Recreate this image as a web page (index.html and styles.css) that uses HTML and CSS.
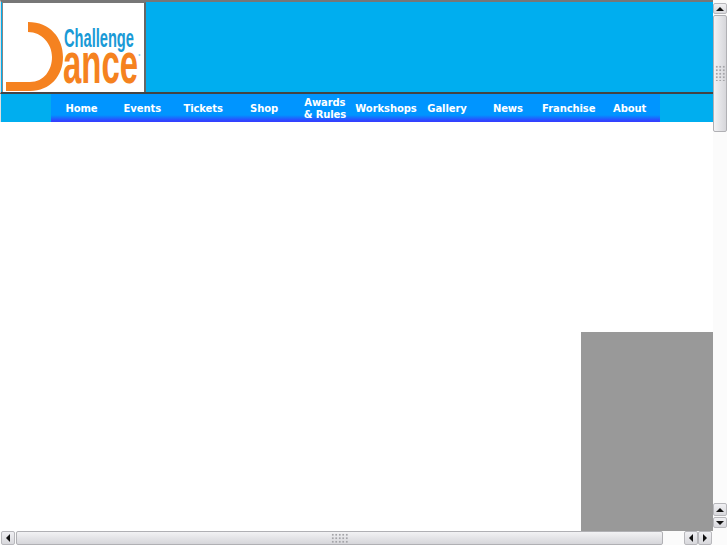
FILE: index.html
```html
<!DOCTYPE html>
<html>
<head>
	<title>Challenge Dance</title>
	<link rel="stylesheet" href="styles.css">
</head>
<body>
	<div class="window">
		<div class="content">
			<div class="header">
				<div class="logo">
					<svg width="141" height="89" viewBox="3 3 141 89">
						<path class="logo-arc" d="M28 22C50 22 63 38 63 57C63 76 50 91 30 91L6 91L6 82L30 82C44 82 52 70 52 57C52 44 42 32 28 32Z"/>
						<text class="logo-small" transform="translate(64 47) scale(.586 1)">Challenge</text>
						<text class="logo-big" transform="translate(63 83) scale(.568 1)">ance</text>
						<circle class="logo-mark" cx="139.500" cy="55" r="1"/>
					</svg>
				</div>
			</div>
			<div class="nav">
				<ul class="menu">
					<li>Home</li>
					<li>Events</li>
					<li>Tickets</li>
					<li>Shop</li>
					<li>Awards<br>&amp; Rules</li>
					<li>Workshops</li>
					<li>Gallery</li>
					<li>News</li>
					<li>Franchise</li>
					<li>About</li>
				</ul>
			</div>
			<div class="main">
				<div class="grey-box"></div>
			</div>
		</div>

		<div class="vbar">
			<div class="btn first"><span class="arrow up"></span></div>
			<div class="thumb vthumb"><span class="grip"></span></div>
			<div class="track"></div>
			<div class="btn second"><span class="arrow up"></span></div>
			<div class="btn last"><span class="arrow down"></span></div>
		</div>

		<div class="hbar">
			<div class="btn"><span class="arrow left"></span></div>
			<div class="thumb hthumb"><span class="grip"></span></div>
			<div class="track"></div>
			<div class="btn"><span class="arrow left"></span></div>
			<div class="btn"><span class="arrow right"></span></div>
		</div>
		<div class="corner"></div>
	</div>
</body>
</html>
```

FILE: styles.css
```css
html, body {
    margin: 0;
    height: 100%;
    overflow: hidden;
    background-color: #fff;
}

.window {
    display: grid;
    grid-template-columns: 713px 14px;
    grid-template-rows: 531px 14px;
    width: 727px;
    height: 545px;
}

.content {
    display: flex;
    flex-direction: column;
    min-height: 0;
}

.header {
    box-sizing: border-box;
    height: 94px;
    padding-left: 1px;
    background-color: #00aeef;
    border-top: 2px solid #777;
    border-bottom: 2px solid #444;
    border-left: 1px solid #e0e0e0;
}

.logo {
    box-sizing: border-box;
    width: 144px;
    height: 90px;
    background-color: #fff;
    border-top: 1px solid #777;
    border-right: 2px solid #666;
    border-left: 1px solid #888;
}

.logo svg {
    display: block;
    overflow: visible;
}

.logo-arc {
    fill: #f58220;
}

.logo-small {
    fill: #1a9ad6;
    font-family: "Liberation Sans", Arial, sans-serif;
    font-size: 25px;
    font-weight: bold;
}

.logo-big {
    fill: #f58220;
    font-family: "Liberation Sans", Arial, sans-serif;
    font-weight: bold;
    font-size: 58px;
}

.logo-mark {
    fill: #8fd0ee;
}

.nav {
    height: 28px;
    padding-left: 50px;
    background-color: #00aeef;
    border-left: 1px solid #e0e0e0;
}

.menu {
    display: flex;
    width: 609px;
    height: 28px;
    margin: 0;
    padding: 0;
    list-style: none;
    background: linear-gradient(#0095ff 0, #0095ff 21px, #3340ff 27px);
}

.menu li {
    display: flex;
    flex: 1;
    align-items: center;
    justify-content: center;
    padding-top: 2px;
    text-align: center;
    color: #fff;
    font-family: "DejaVu Sans", Verdana, sans-serif;
    font-size: 10px;
    font-weight: bold;
    line-height: 12px;
    letter-spacing: -0.1px;
    white-space: nowrap;
}

.main {
    display: flex;
    flex: 1;
    justify-content: flex-end;
    align-items: flex-end;
    background-color: #fff;
}

.grey-box {
    width: 132px;
    height: 199px;
    background-color: #999;
}

.vbar {
    display: flex;
    flex-direction: column;
    padding: 3px 0 3px;
    box-sizing: border-box;
    background-color: #fbfbfb;
    grid-row: 1;
    grid-column: 2;
}

.hbar {
    display: flex;
    padding: 0 1px;
    background-color: #fbfbfb;
    grid-row: 2;
    grid-column: 1;
}

.btn {
    display: flex;
    flex: none;
    align-items: center;
    justify-content: center;
    box-sizing: border-box;
    width: 14px;
    height: 14px;
    background: linear-gradient(#f0f0f3, #d8d8dc);
    border: 1px solid #b8b8bc;
    border-radius: 2px;
}

.btn.first {
    height: 11px;
    margin-bottom: 1px;
}

.btn.second {
    height: 13px;
    margin-bottom: 1px;
}

.btn.last {
    height: 11px;
}

.track {
    flex: 1;
}

.thumb {
    display: flex;
    align-items: center;
    justify-content: center;
    box-sizing: border-box;
    border: 1px solid #b0b0b4;
    border-radius: 2px;
}

.vthumb {
    height: 117px;
    background: linear-gradient(90deg, #f2f2f4, #d6d6da);
}

.hthumb {
    width: 647px;
    margin-left: 1px;
    background: linear-gradient(#f2f2f4, #d6d6da);
}

.grip {
    width: 18px;
    height: 10px;
    background-image: radial-gradient(#a4a4a8 40%, transparent 55%);
    background-size: 3.500px 3.500px;
}

.vthumb .grip {
    width: 10px;
    height: 16px;
    margin-bottom: 2px;
}

.arrow {
    width: 0;
    height: 0;
    border: 4.500px solid transparent;
}

.arrow.up {
    margin-top: -4px;
    border-bottom-color: #111;
}

.arrow.down {
    margin-top: 4px;
    border-top-color: #111;
}

.arrow.left {
    margin-left: -4px;
    border-right-color: #111;
}

.arrow.right {
    margin-left: 4px;
    border-left-color: #111;
}

.corner {
    background-color: #fbfbfb;
}
```
